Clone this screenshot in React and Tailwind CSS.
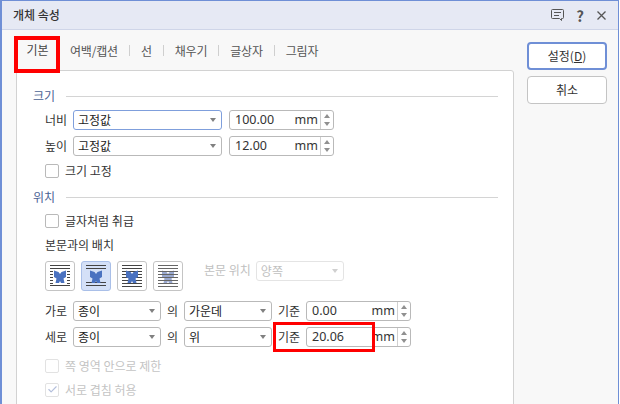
import { Check as CheckIcon } from 'lucide-react'

const FONT = "font-['Noto_Sans_CJK_KR','Noto_Sans',sans-serif]"

const TABS = ['여백/캡션', '선', '채우기', '글상자', '그림자']

function Caret({ disabled }) {
  return (
    <span
      className={`w-0 h-0 border-x-[3.5px] border-x-transparent border-t-[4px] ${disabled ? 'border-t-[#d0d0d0]' : 'border-t-[#808080]'}`}
    />
  )
}

function Select({ value, width, focus }) {
  return (
    <div
      className={`flex items-center justify-between h-[20px] pl-[4px] pr-[5px] rounded-[3px] border bg-white text-[#222] ${width} ${focus ? 'border-[#7f9fdc]' : 'border-[#b9b9b9]'}`}
    >
      <span>{value}</span>
      <Caret />
    </div>
  )
}

function NumInput({ value, width }) {
  return (
    <div className={`flex items-center h-[20px] rounded-[3px] border border-[#b9b9b9] bg-white text-[12.5px] text-[#333] font-['Noto_Sans',sans-serif] ${width}`}>
      <span className="flex-1 pl-[5px]">{value}</span>
      <span className="pr-[2px]">mm</span>
      <div className="flex flex-col items-center justify-center gap-[4px] w-[13px] h-full border-l border-[#d0d0d0]">
        <span className="w-0 h-0 border-x-[3px] border-x-transparent border-b-[4px] border-b-[#909090]" />
        <span className="w-0 h-0 border-x-[3px] border-x-transparent border-t-[4px] border-t-[#909090]" />
      </div>
    </div>
  )
}

function Checkbox({ label, disabled, checked, className }) {
  return (
    <div className={`flex items-center gap-[6px] ml-[28px] h-[15px] ${disabled ? 'text-[#c4c4c4]' : 'text-[#333]'} ${className}`}>
      <span className={`flex items-center justify-center w-[14px] h-[14px] rounded-[2px] border bg-white ${disabled ? 'border-[#e2e2e2]' : 'border-[#b9b9b9]'}`}>
        {checked && <CheckIcon size={11} strokeWidth={2.5} className="text-[#b4bfdc]" />}
      </span>
      <span>{label}</span>
    </div>
  )
}

function Heading({ label, className }) {
  return (
    <div className={`flex items-center gap-[11px] ml-[16px] mr-[15px] h-[16px] text-[#4a6294] ${className}`}>
      <span>{label}</span>
      <span className="flex-1 h-px bg-[#d4d4d4]" />
    </div>
  )
}

const BUTTERFLY = 'M9 9.5 L13.5 11 L15 13 L16.5 11 L21 9.5 L21 16 L18.5 17.5 L19.5 22 L16 22 L15 20 L14 22 L10.5 22 L11.5 17.5 L9 16 Z'

// wrap mode icons: lines with a butterfly
function WrapIcon({ mode, active }) {
  const full = { square: [4, 7, 24], topBottom: [4, 7, 21, 24], front: [4, 7, 10, 13, 16, 19, 22, 25], back: [4, 7, 10, 13, 16, 19, 22, 25] }[mode]
  const color = mode === 'back' ? '#9aa9d0' : '#4a72c0'
  const lines = full.map(y => <rect key={y} x="5" y={y} width="20" height="1" fill={mode === 'back' ? '#666' : '#444'} />)
  const fly = <path d={BUTTERFLY} fill={color} />
  return (
    <div className={`flex items-center justify-center w-[30px] h-[30px] rounded-[3px] border ${active ? 'border-[#a9bfe8] bg-[#d4e0f7]' : 'border-[#c4c4c4] bg-white'}`}>
      <svg width="28" height="28" viewBox="1 1 28 28">
        {mode === 'square' && [10, 13, 16, 19, 22].map(y => (
          <g key={y} fill="#444">
            <rect x="5" y={y} width="3" height="1" />
            <rect x="22" y={y} width="3" height="1" />
          </g>
        ))}
        {mode === 'back' ? fly : lines}
        {mode === 'back' ? lines : fly}
      </svg>
    </div>
  )
}

function PlaceRow({ label, first, second, num, className }) {
  return (
    <div className={`flex items-center ml-[28px] h-[20px] ${className}`}>
      <span className="w-[28px] text-[#333]">{label}</span>
      <Select value={first} width="w-[88px]" />
      <span className="w-[23px] text-center text-[#333]">의</span>
      <Select value={second} width="w-[88px]" />
      <span className="w-[34px] text-center text-[#333]">기준</span>
      <NumInput value={num} width="w-[105px]" />
    </div>
  )
}

export default function App() {
  return (
    <div className="w-[620px] h-[404px] bg-white overflow-hidden">
      <div className={`${FONT} relative flex flex-col w-[619px] h-[404px] overflow-hidden bg-[#f8f8f8] border-t border-l-2 border-r border-[#6f8fd6] text-[12px] leading-none`}>
        {/* Title bar */}
        <div className="flex items-center justify-between shrink-0 h-[29px] pl-[11px] pr-[12px] bg-[#e6e9f4] border-b border-[#cfd5e8]">
          <span className="text-[12px] font-medium text-[#333]">개체 속성</span>
          <div className="flex items-center text-[#555]">
            <svg width="13" height="12" viewBox="0 0 13 12" fill="none" stroke="currentColor">
              <path d="M1.5 .5 H11.5 A1 1 0 0 1 12.5 1.5 V8.5 A1 1 0 0 1 11.5 9.5 H10.5 V11.5 L8.5 9.5 H1.5 A1 1 0 0 1 .5 8.5 V1.5 A1 1 0 0 1 1.5 .5 Z" />
              <path d="M3 3.5 H10 M3 6.5 H8" />
            </svg>
            <span className="ml-[12px] text-[15px] font-bold">?</span>
            <svg width="9" height="9" viewBox="0 0 9 9" className="ml-[13px]" fill="none" stroke="currentColor" strokeWidth="1.3">
              <path d="M.5 .5 L8.5 8.5 M8.5 .5 L.5 8.5" />
            </svg>
          </div>
        </div>

        <div className="flex flex-1 min-h-0 pl-[14px] pr-[11px]">
          {/* Left: tabs + panel */}
          <div className="flex flex-col w-[498px]">
            <div className="flex items-center shrink-0 h-[41px] text-[#555]">
              <div className="flex items-center justify-center w-[41px] h-[41px] ml-[1px] border-b-2 border-[#6f8fd6] text-[#444]">기본</div>
              <div className="flex items-center ml-[12px] tracking-[-0.2px]">
                {TABS.map((t, i) => (
                  <div key={t} className="flex items-center">
                    {i > 0 && <span className="w-px h-[11px] mx-[11px] bg-[#cfcfcf]" />}
                    <span>{t}</span>
                  </div>
                ))}
              </div>
            </div>

            {/* Panel */}
            <div className="flex-1 -mt-px bg-white border border-[#d2d2d2] rounded-t-[3px] pt-[17px] min-h-[400px]">
              <Heading label="크기" />
              <div className="flex items-center ml-[28px] mt-[6px] h-[20px]">
                <span className="w-[28px] text-[#333]">너비</span>
                <Select value="고정값" width="w-[149px]" focus />
                <div className="w-[7px]" />
                <NumInput value="100.00" width="w-[105px]" />
              </div>
              <div className="flex items-center ml-[28px] mt-[6px] h-[20px]">
                <span className="w-[28px] text-[#333]">높이</span>
                <Select value="고정값" width="w-[149px]" />
                <div className="w-[7px]" />
                <NumInput value="12.00" width="w-[105px]" />
              </div>
              <Checkbox label="크기 고정" className="mt-[7px]" />

              <Heading label="위치" className="mt-[11px]" />
              <Checkbox label="글자처럼 취급" className="mt-[8px]" />
              <div className="ml-[28px] mt-[11px] h-[14px] text-[#333]">본문과의 배치</div>

              <div className="flex items-start ml-[28px] mt-[8px]">
                <div className="flex gap-[6px]">
                  <WrapIcon mode="square" />
                  <WrapIcon mode="topBottom" active />
                  <WrapIcon mode="front" />
                  <WrapIcon mode="back" />
                </div>
                <span className="ml-[21px] mt-[3px] text-[#c0c0c0]">본문 위치</span>
                <div className="flex items-center justify-between w-[88px] h-[20px] ml-[5px] pl-[4px] pr-[5px] rounded-[3px] border border-[#e4e4e4] text-[#c0c0c0]">
                  <span>양쪽</span>
                  <Caret disabled />
                </div>
              </div>

              <PlaceRow label="가로" first="종이" second="가운데" num="0.00" className="mt-[10px]" />
              <PlaceRow label="세로" first="종이" second="위" num="20.06" className="mt-[6px]" />

              <Checkbox disabled label="쪽 영역 안으로 제한" className="mt-[11px]" />
              <Checkbox disabled checked label="서로 겹침 허용" className="mt-[9px]" />
            </div>
          </div>

          {/* Right: buttons */}
          <div className="flex flex-col ml-[13px] mt-[12px] gap-[6px]">
            <button className="w-[80px] h-[28px] rounded-[4px] border-2 border-[#6f8fd6] bg-white text-[#333]">
              설정(<span className="underline">D</span>)
            </button>
            <button className="w-[80px] h-[28px] rounded-[4px] border border-[#c4c4c4] bg-white text-[#333]">취소</button>
          </div>
        </div>

        {/* Red annotation boxes */}
        <div className="absolute left-[12px] top-[35px] w-[46px] h-[37px] border-[4px] border-[#ff0000]" />
        <div className="absolute left-[271px] top-[321px] w-[102px] h-[30px] border-[3px] border-[#ff0000]" />
      </div>
    </div>
  )
}
